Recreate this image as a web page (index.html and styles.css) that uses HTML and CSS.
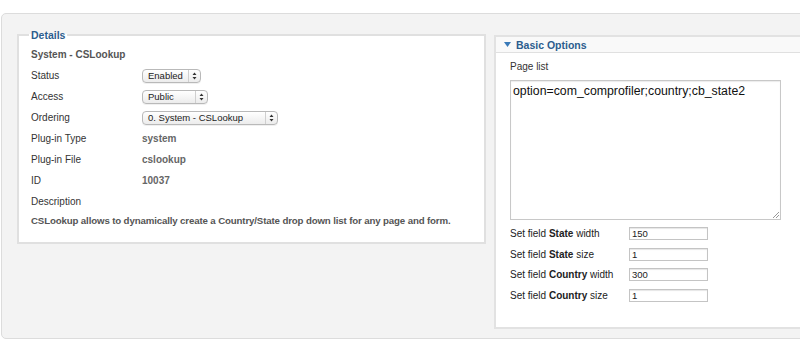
FILE: index.html
```html
<!DOCTYPE html>
<html>
<head>
<meta charset="utf-8">
<link rel="stylesheet" href="styles.css">
</head>
<body>
<div class="panel">
  <fieldset class="details">
    <legend>Details</legend>
    <div class="row"><span class="value strong">System - CSLookup</span></div>
    <div class="row"><span class="label">Status</span>
      <span class="select w-enabled"><span class="sel-text">Enabled</span><span class="sel-arrows"><svg width="5" height="8" viewBox="0 0 5 8"><path d="M0.5 3 L2.5 0.5 L4.5 3 Z M0.5 5 L2.5 7.5 L4.5 5 Z" fill="#333"/></svg></span></span></div>
    <div class="row"><span class="label">Access</span>
      <span class="select w-public"><span class="sel-text">Public</span><span class="sel-arrows"><svg width="5" height="8" viewBox="0 0 5 8"><path d="M0.5 3 L2.5 0.5 L4.5 3 Z M0.5 5 L2.5 7.5 L4.5 5 Z" fill="#333"/></svg></span></span></div>
    <div class="row"><span class="label">Ordering</span>
      <span class="select w-order"><span class="sel-text">0. System - CSLookup</span><span class="sel-arrows"><svg width="5" height="8" viewBox="0 0 5 8"><path d="M0.5 3 L2.5 0.5 L4.5 3 Z M0.5 5 L2.5 7.5 L4.5 5 Z" fill="#333"/></svg></span></span></div>
    <div class="row"><span class="label">Plug-in Type</span><span class="value">system</span></div>
    <div class="row"><span class="label">Plug-in File</span><span class="value">cslookup</span></div>
    <div class="row"><span class="label">ID</span><span class="value">10037</span></div>
    <div class="row r-desc-label"><span class="label">Description</span></div>
    <div class="row r-desc"><span class="value strong desc">CSLookup allows to dynamically create a Country/State drop down list for any page and form.</span></div>
  </fieldset>

  <div class="options">
    <div class="opt-head"><svg class="tri" width="7" height="5" viewBox="0 0 7 5"><path d="M0 0 L7 0 L3.5 5 Z" fill="#3a7ab8"/></svg><span>Basic Options</span></div>
    <div class="opt-body">
      <div class="pl-label">Page list</div>
      <div class="textarea">option=com_comprofiler;country;cb_state2<svg class="grip" width="7" height="7" viewBox="0 0 7 7"><path d="M1 7 L7 1 M4 7 L7 4" stroke="#999" stroke-width="1"/></svg></div>
      <div class="fields">
        <div class="frow"><span class="flabel">Set field <b>State</b> width</span><span class="input">150</span></div>
        <div class="frow"><span class="flabel">Set field <b>State</b> size</span><span class="input">1</span></div>
        <div class="frow"><span class="flabel">Set field <b>Country</b> width</span><span class="input">300</span></div>
        <div class="frow"><span class="flabel">Set field <b>Country</b> size</span><span class="input">1</span></div>
      </div>
    </div>
  </div>
</div>
</body>
</html>
```
FILE: styles.css
```css
html, body {
  margin: 0;
  padding: 0;
  background: #ffffff;
  overflow: hidden;
  width: 800px;
  height: 345px;
}
body {
  font-family: "Liberation Sans", Arial, sans-serif;
  font-size: 10px;
  color: #333;
}
.panel {
  margin: 13px 0 0 1px;
  width: 830px;
  height: 326px;
  box-sizing: border-box;
  background: #f3f3f3;
  border: 1px solid #dcdcdc;
  border-radius: 5px;
  display: flex;
  align-items: flex-start;
  padding: 15px 0 0 15px;
  gap: 8px;
}
.details {
  margin: 0;
  width: 469px;
  box-sizing: border-box;
  background: #fff;
  border: 2px solid #e0e0e0;
  padding: 3px 12px 12px 12px;
  min-width: 0;
}
.details legend {
  color: #2c5d8e;
  font-weight: bold;
  font-size: 10.5px;
  padding: 0 2px;
  margin-left: -2px;
}
.row {
  display: flex;
  align-items: center;
  height: 21px;
}
.row.r-desc-label { height: 20px; }
.row.r-desc { height: 19px; }
.label {
  width: 111px;
  flex: none;
}
.value {
  font-weight: bold;
  color: #666;
}
.strong { color: #555; }
.desc {
  white-space: nowrap;
  font-size: 9.7px;
  letter-spacing: -0.14px;
}
.select {
  display: flex;
  align-items: center;
  height: 14px;
  box-sizing: border-box;
  border: 1px solid #b9b9b9;
  border-radius: 4px;
  background: linear-gradient(#ffffff, #ececec);
  font-size: 9.5px;
  color: #222;
  box-shadow: 0 1px 0 rgba(0,0,0,0.06);
}
.sel-text {
  flex: 1;
  padding-left: 5px;
  white-space: nowrap;
}
.sel-arrows {
  width: 11px;
  height: 100%;
  border-left: 1px solid #cfcfcf;
  display: flex;
  align-items: center;
  justify-content: center;
}
.w-enabled { width: 59px; }
.w-public { width: 66px; }
.w-order { width: 136px; }

.options {
  margin-top: 6px;
  width: 330px;
  height: 294px;
  box-sizing: border-box;
  background: #fff;
  border: 2px solid #e2e2e2;
}
.opt-head {
  height: 15px;
  border-bottom: 1px solid #e0e0e0;
  background: #f9f9f9;
  display: flex;
  align-items: center;
  padding-left: 8px;
  gap: 5px;
  color: #2c5d8e;
  font-weight: bold;
  font-size: 10.5px;
}
.opt-body {
  padding: 6px 0 0 14px;
}
.pl-label {
  height: 21px;
  line-height: 16px;
}
.textarea {
  position: relative;
  width: 271px;
  height: 140px;
  box-sizing: border-box;
  border: 1px solid #c8c8c8;
  box-shadow: inset 0 1px 1px rgba(0,0,0,0.08);
  padding: 3px 2px;
  font-size: 12.3px;
  color: #111;
}
.grip {
  position: absolute;
  right: 1px;
  bottom: 1px;
}
.fields {
  padding-top: 3px;
}
.frow {
  display: flex;
  align-items: center;
  height: 20.7px;
}
.flabel {
  width: 119px;
  flex: none;
  color: #222;
}
.flabel b { color: #222; }
.input {
  width: 79px;
  height: 13px;
  box-sizing: border-box;
  border: 1px solid #c4c4c4;
  box-shadow: inset 0 1px 1px rgba(0,0,0,0.1);
  font-size: 9.5px;
  line-height: 11px;
  padding-left: 2px;
  color: #222;
}
```
